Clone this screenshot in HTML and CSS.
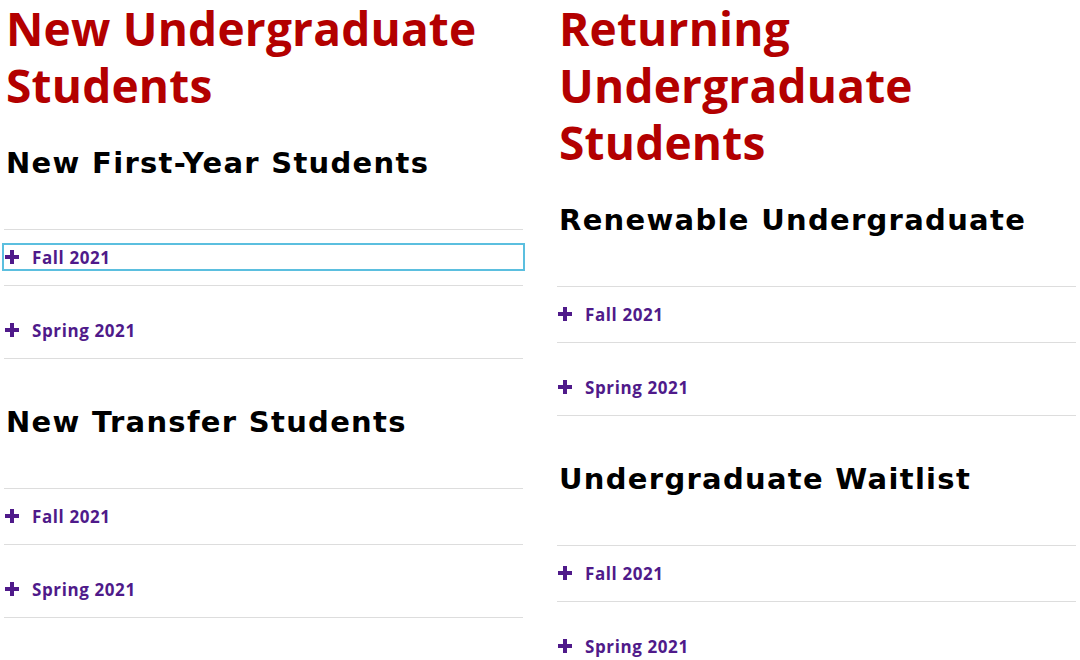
FILE: index.html
```html
<!DOCTYPE html>
<html lang="en">
<head>
<meta charset="utf-8">
<title>Undergraduate Students</title>
<link rel="stylesheet" href="styles.css">
</head>
<body>
<main class="page">
  <div class="col">
    <h1 class="title">New Undergraduate Students</h1>
    <section class="section">
      <h2 class="subtitle">New First-Year Students</h2>
      <div class="accordion">
        <div class="item"><button class="toggle focused"><svg class="plus" viewBox="0 0 14 14"><rect x="5" y="0" width="4" height="14"/><rect x="0" y="5" width="14" height="4"/></svg><span>Fall 2021</span></button></div>
        <div class="item"><button class="toggle"><svg class="plus" viewBox="0 0 14 14"><rect x="5" y="0" width="4" height="14"/><rect x="0" y="5" width="14" height="4"/></svg><span>Spring 2021</span></button></div>
      </div>
    </section>
    <section class="section">
      <h2 class="subtitle">New Transfer Students</h2>
      <div class="accordion">
        <div class="item"><button class="toggle"><svg class="plus" viewBox="0 0 14 14"><rect x="5" y="0" width="4" height="14"/><rect x="0" y="5" width="14" height="4"/></svg><span>Fall 2021</span></button></div>
        <div class="item"><button class="toggle"><svg class="plus" viewBox="0 0 14 14"><rect x="5" y="0" width="4" height="14"/><rect x="0" y="5" width="14" height="4"/></svg><span>Spring 2021</span></button></div>
      </div>
    </section>
  </div>
  <div class="col">
    <h1 class="title">Returning Undergraduate Students</h1>
    <section class="section">
      <h2 class="subtitle">Renewable Undergraduate</h2>
      <div class="accordion">
        <div class="item"><button class="toggle"><svg class="plus" viewBox="0 0 14 14"><rect x="5" y="0" width="4" height="14"/><rect x="0" y="5" width="14" height="4"/></svg><span>Fall 2021</span></button></div>
        <div class="item"><button class="toggle"><svg class="plus" viewBox="0 0 14 14"><rect x="5" y="0" width="4" height="14"/><rect x="0" y="5" width="14" height="4"/></svg><span>Spring 2021</span></button></div>
      </div>
    </section>
    <section class="section">
      <h2 class="subtitle">Undergraduate Waitlist</h2>
      <div class="accordion">
        <div class="item"><button class="toggle"><svg class="plus" viewBox="0 0 14 14"><rect x="5" y="0" width="4" height="14"/><rect x="0" y="5" width="14" height="4"/></svg><span>Fall 2021</span></button></div>
        <div class="item"><button class="toggle"><svg class="plus" viewBox="0 0 14 14"><rect x="5" y="0" width="4" height="14"/><rect x="0" y="5" width="14" height="4"/></svg><span>Spring 2021</span></button></div>
      </div>
    </section>
  </div>
</main>
</body>
</html>
```

FILE: styles.css
```css
* { box-sizing: border-box; }
html, body { margin: 0; padding: 0; background: #fff; }
body { font-family: "Open Sans", "Liberation Sans", sans-serif; color: #000; overflow: hidden; }
.page {
  display: grid;
  grid-template-columns: 519px 519px;
  column-gap: 34px;
  padding: 0 4px;
}
.title {
  margin: 0;
  padding-left: 2px;
  font-size: 46px;
  line-height: 57px;
  font-weight: 700;
  letter-spacing: 0.2px;
  color: #b30000;
}
.section { padding-top: 29px; }
.section + .section { padding-top: 43px; }
.subtitle {
  margin: 0 0 46px;
  padding-left: 2px;
  font-family: "DejaVu Sans", "Open Sans", sans-serif;
  font-size: 29px;
  line-height: 40px;
  font-weight: 700;
  letter-spacing: 1.3px;
  color: #000;
}
.accordion { border-top: 1px solid #dddddd; }
.item {
  padding: 15px 0 16px;
  border-bottom: 1px solid #dddddd;
}
.item + .item { padding-top: 32px; }
.toggle {
  display: flex;
  align-items: center;
  gap: 13px;
  width: 100%;
  height: 24px;
  padding: 0 0 0 1px;
  border: 0;
  background: none;
  font-family: inherit;
  font-size: 17px;
  font-weight: 700;
  letter-spacing: 0.6px;
  color: #4f1a8a;
  text-align: left;
  cursor: pointer;
}
.toggle.focused { outline: 2px solid #5bbfdf; }
.plus { width: 14px; height: 14px; fill: #4f1a8a; flex: none; }
```
